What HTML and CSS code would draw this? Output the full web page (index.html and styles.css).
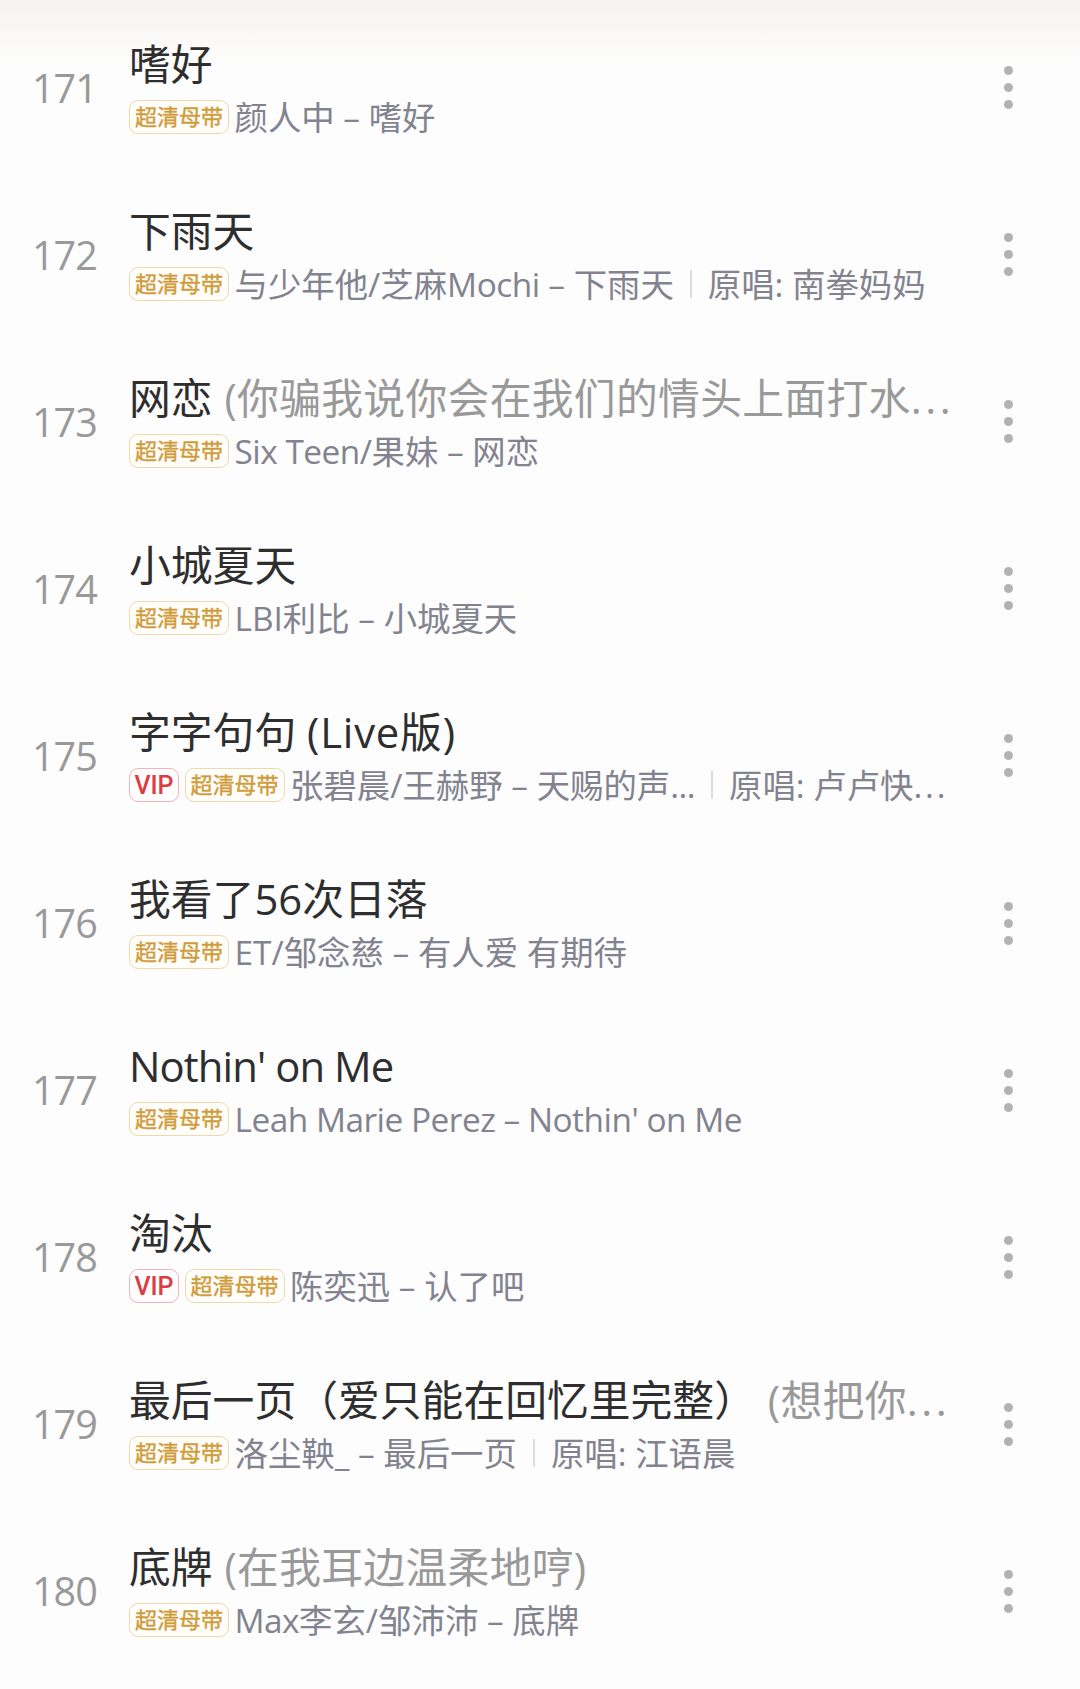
FILE: index.html
```html
<!DOCTYPE html>
<html lang="zh-CN">
<head>
    <meta charset="UTF-8">
    <meta name="viewport" content="width=device-width, initial-scale=1.0">
    <title>歌单</title>
    <link rel="stylesheet" href="styles.css">
</head>
<body>
    <ul class="song-list">
        <li class="song">
            <span class="number">171</span>
            <div class="info">
                <div class="title">嗜好</div>
                <div class="meta"><span class="tag quality">超清母带</span><span>颜人中 – 嗜好</span></div>
            </div>
            <div class="more"><i></i><i></i><i></i></div>
        </li>
        <li class="song">
            <span class="number">172</span>
            <div class="info">
                <div class="title">下雨天</div>
                <div class="meta"><span class="tag quality">超清母带</span><span>与少年他/芝麻<span class="latin">Mochi</span> – 下雨天</span><span class="divider"></span><span>原唱: 南拳妈妈</span></div>
            </div>
            <div class="more"><i></i><i></i><i></i></div>
        </li>
        <li class="song">
            <span class="number">173</span>
            <div class="info">
                <div class="title">网恋 <span class="alias">(你骗我说你会在我们的情头上面打水<span class="dots">...</span></span></div>
                <div class="meta"><span class="tag quality">超清母带</span><span><span class="latin">Six Teen/</span>果妹 – 网恋</span></div>
            </div>
            <div class="more"><i></i><i></i><i></i></div>
        </li>
        <li class="song">
            <span class="number">174</span>
            <div class="info">
                <div class="title">小城夏天</div>
                <div class="meta"><span class="tag quality">超清母带</span><span>LBI利比 – 小城夏天</span></div>
            </div>
            <div class="more"><i></i><i></i><i></i></div>
        </li>
        <li class="song">
            <span class="number">175</span>
            <div class="info">
                <div class="title">字字句句 <span class="live">(Live版)</span></div>
                <div class="meta"><span class="tag vip">VIP</span><span class="tag quality">超清母带</span><span>张碧晨/王赫野 – 天赐的声<span class="latin">...</span></span><span class="divider"></span><span>原唱: 卢卢快<span class="dots">...</span></span></div>
            </div>
            <div class="more"><i></i><i></i><i></i></div>
        </li>
        <li class="song">
            <span class="number">176</span>
            <div class="info">
                <div class="title">我看了56次日落</div>
                <div class="meta"><span class="tag quality">超清母带</span><span>ET/邹念慈 – 有人爱 有期待</span></div>
            </div>
            <div class="more"><i></i><i></i><i></i></div>
        </li>
        <li class="song">
            <span class="number">177</span>
            <div class="info">
                <div class="title"><span class="latin">Nothin' on Me</span></div>
                <div class="meta"><span class="tag quality">超清母带</span><span class="latin">Leah Marie Perez – Nothin' on Me</span></div>
            </div>
            <div class="more"><i></i><i></i><i></i></div>
        </li>
        <li class="song">
            <span class="number">178</span>
            <div class="info">
                <div class="title">淘汰</div>
                <div class="meta"><span class="tag vip">VIP</span><span class="tag quality">超清母带</span><span>陈奕迅 – 认了吧</span></div>
            </div>
            <div class="more"><i></i><i></i><i></i></div>
        </li>
        <li class="song">
            <span class="number">179</span>
            <div class="info">
                <div class="title">最后一页（爱只能在回忆里完整） <span class="alias">(想把你<span class="dots">...</span></span></div>
                <div class="meta"><span class="tag quality">超清母带</span><span>洛尘鞅_ – 最后一页</span><span class="divider"></span><span>原唱: 江语晨</span></div>
            </div>
            <div class="more"><i></i><i></i><i></i></div>
        </li>
        <li class="song">
            <span class="number">180</span>
            <div class="info">
                <div class="title">底牌 <span class="alias">(在我耳边温柔地哼)</span></div>
                <div class="meta"><span class="tag quality">超清母带</span><span><span class="latin">Max</span>李玄/邹沛沛 – 底牌</span></div>
            </div>
            <div class="more"><i></i><i></i><i></i></div>
        </li>
    </ul>
</body>
</html>
```
FILE: styles.css
```css
* {
    box-sizing: border-box;
}
body {
    font-family: 'Open Sans', 'Noto Sans CJK SC', sans-serif;
    margin: 0;
    height: 1689px;
    overflow: hidden;
    background: linear-gradient(#f5f2f1 0, #fbf9f8 38px, #fdfdfd 70px);
}
.song-list {
    list-style: none;
    margin: 0;
    padding: 4px 0 0;
}
.song {
    display: flex;
    align-items: center;
    height: 167.1px;
    padding: 0 67px 0 32px;
}
.number {
    width: 97px;
    flex: none;
    color: #999;
    font-size: 39.5px;
    letter-spacing: -1px;
    line-height: 48px;
}
.info {
    flex: 1;
    min-width: 0;
    white-space: nowrap;
}
.title {
    color: #2e2e2e;
    font-size: 41.8px;
    line-height: 57px;
    height: 58px;
}
.alias {
    margin-left: 1px;
    color: #999;
    letter-spacing: 0.3px;
}
.live {
    letter-spacing: 0.8px;
}
.latin {
    letter-spacing: -0.5px;
}
.title .latin {
    letter-spacing: -0.9px;
}
.dots {
    letter-spacing: 0.085em;
}
.meta {
    display: flex;
    align-items: center;
    height: 48px;
    color: #82838f;
    font-size: 33.4px;
    line-height: 46px;
}
.tag {
    flex: none;
    height: 34px;
    margin-right: 5.5px;
    border: 1.5px solid;
    border-radius: 9px;
    font-size: 22px;
    line-height: 30px;
    text-align: center;
}
.quality {
    width: 100px;
    color: #d09b3a;
    border-color: #ecd9ac;
    background: #fffefa;
    -webkit-text-stroke: 0.4px #d09b3a;
}
.vip {
    width: 50px;
    color: #dc3c42;
    border-color: #f3b3bc;
    background: #fffdfd;
    font-family: Roboto, sans-serif;
    font-size: 25px;
    font-weight: 500;
    line-height: 33px;
}
.divider {
    width: 2px;
    height: 28px;
    margin: 0 16px 0 16px;
    background: #dcdcde;
}
.more {
    display: flex;
    flex-direction: column;
    gap: 8px;
    flex: none;
}
.more i {
    width: 9px;
    height: 9px;
    border-radius: 50%;
    background: #b2b2b2;
}
```
